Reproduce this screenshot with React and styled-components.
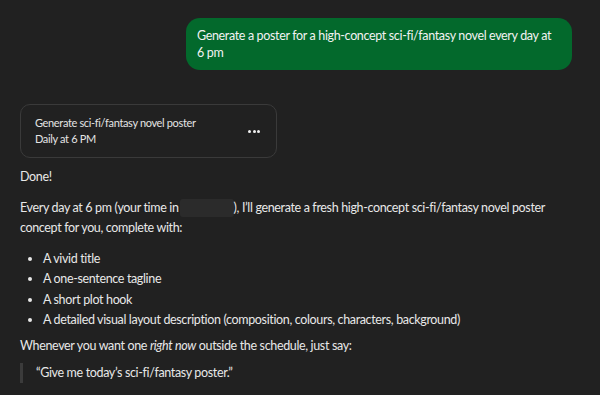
import React from "react";
import styled, { createGlobalStyle } from "styled-components";

const Global = createGlobalStyle`
  html, body {
    margin: 0;
    background: #212121;
  }
  body {
    font-family: Lato, "Noto Sans", sans-serif;
    color: #e8e8e8;
  }
`;

const Page = styled.div`
  width: 600px;
  height: 395px;
  overflow: hidden;
  padding: 18px 28px 0 20px;
  box-sizing: border-box;
  display: flex;
  flex-direction: column;
`;

const UserRow = styled.div`
  display: flex;
  justify-content: flex-end;
`;

const Bubble = styled.div`
  width: 386px;
  box-sizing: border-box;
  background: #03692c;
  color: #f2f2f2;
  border-radius: 14px;
  padding: 9px 12px 9px 11px;
  font-size: 12.5px;
  letter-spacing: -0.35px;
  line-height: 17px;
`;

const Reply = styled.div`
  margin-top: 34px;
  font-size: 12.5px;
  letter-spacing: -0.35px;
  line-height: 20px;
`;

const TaskCard = styled.div`
  width: 257px;
  height: 54px;
  box-sizing: border-box;
  border: 1px solid #3a3a3a;
  border-radius: 10px;
  display: flex;
  align-items: center;
  justify-content: space-between;
  padding: 0 16px 0 14px;
`;

const TaskText = styled.div`
  display: flex;
  flex-direction: column;
  font-size: 11px;
  letter-spacing: -0.35px;
  line-height: 16px;
  color: #e4e4e4;
`;

const Dots = styled.span`
  display: flex;
  gap: 1.5px;
  margin-top: 1px;
  span {
    width: 3px;
    height: 3px;
    border-radius: 50%;
    background: #f0f0f0;
  }
`;

const Para = styled.p`
  margin: ${(p) => p.$top || 0}px 0 0;
`;

const Redacted = styled.span`
  display: inline-block;
  width: 54px;
  height: 18px;
  margin-left: 1px;
  background: #2b2b2b;
  border-radius: 3px;
  vertical-align: -5px;
`;

const List = styled.ul`
  margin: 11px 0 0;
  padding: 0 0 0 23px;
  li {
    padding-left: 0;
    line-height: 20.3px;
  }
`;

const Quote = styled.blockquote`
  margin: 7px 0 0;
  border-left: 3px solid #3b3b3b;
  padding: 0 0 0 13px;
`;

export default function App() {
  return (
    <>
      <Global />
      <Page>
        <UserRow>
          <Bubble>
            Generate a poster for a high-concept sci-fi/fantasy novel every day at 6 pm
          </Bubble>
        </UserRow>
        <Reply>
          <TaskCard>
            <TaskText>
              <span>Generate sci-fi/fantasy novel poster</span>
              <span>Daily at 6 PM</span>
            </TaskText>
            <Dots>
              <span />
              <span />
              <span />
            </Dots>
          </TaskCard>
          <Para $top={9}>Done!</Para>
          <Para $top={11}>
            Every day at 6 pm (your time in<Redacted />), I’ll generate a fresh high-concept
            sci-fi/fantasy novel poster concept for you, complete with:
          </Para>
          <List>
            <li>A vivid title</li>
            <li>A one-sentence tagline</li>
            <li>A short plot hook</li>
            <li>A detailed visual layout description (composition, colours, characters, background)</li>
          </List>
          <Para $top={6}>
            Whenever you want one <em>right now</em> outside the schedule, just say:
          </Para>
          <Quote>“Give me today’s sci-fi/fantasy poster.”</Quote>
        </Reply>
      </Page>
    </>
  );
}
